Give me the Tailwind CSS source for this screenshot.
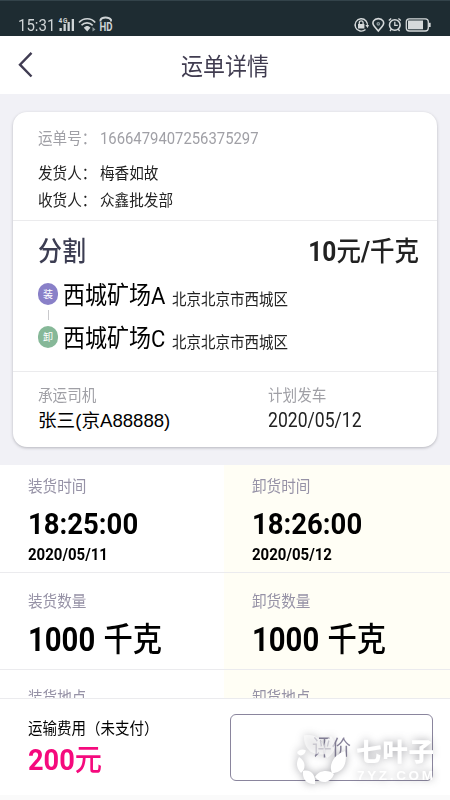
<!DOCTYPE html>
<html lang="zh-CN">
<head>
<meta charset="utf-8">
<title>运单详情</title>
<script src="https://cdn.jsdelivr.net/npm/@tailwindcss/browser@4"></script>
</head>
<body class="w-[450px] h-[800px] overflow-hidden bg-[#fafafa] font-['Roboto','Noto_Sans_CJK_SC',sans-serif] whitespace-nowrap">
<div class="flex flex-col h-[800px] relative overflow-hidden">

  <!-- status bar -->
  <div class="h-9 shrink-0 bg-[#1e2c32] border-t border-[#33434a] flex items-start justify-between pl-[18px] pr-[18px] pt-[15px] text-[#cfd4d6]">
    <div class="flex items-center h-[18px]">
      <span class="text-[15px] leading-[20px] pt-px w-[40px] scale-y-107">15:31</span>
      <svg class="w-[64px] h-[18px]" viewBox="0 0 64 18" fill="none" stroke="#cfd4d6">
        <text x="0.5" y="6.5" font-size="6.5" font-weight="bold" fill="#cfd4d6" stroke="none" font-family="Roboto" textLength="9">4G</text>
        <g fill="#cfd4d6" stroke="none"><rect x="1.500" y="12" width="2.300" height="3"/><rect x="5.500" y="8" width="2.300" height="7"/><rect x="9.500" y="6" width="2.300" height="9"/><rect x="13.700" y="3" width="2.300" height="12"/></g>
        <g stroke-width="1.700" transform="translate(0 -1)"><path d="M21 7.500C25.500 2.500 33 2.500 37.200 7.500M23.500 10.300C26.500 7 31.500 7 34.700 10.300"/><path d="M25.800 12.800C28 10.500 30.500 10.500 32.500 12.800L29.200 16.500Z" fill="#cfd4d6" stroke="none"/><path d="M34.500 12L37.500 14.500L34.500 16.500Z" fill="#8b979b" stroke="none"/></g>
        <path d="M42.500 5.500V3.800C44 .8 51 .8 53 3.800V5.500" stroke-width="1.900"/>
        <text x="41.500" y="15.200" font-size="12" font-weight="bold" fill="#cfd4d6" stroke="none" font-family="Roboto" textLength="13" lengthAdjust="spacingAndGlyphs">HD</text>
      </svg>
    </div>
    <svg class="w-[79px] h-[18px]" viewBox="0 0 79 18" fill="none" stroke="#d5d9da" stroke-width="1.300">
      <path d="M14.300 10.500A6.200 6.200 0 1 0 12.500 13.500"/><path d="M12.400 9L16 9L14.600 12Z" fill="#d5d9da" stroke="none"/>
      <rect x="5" y="8" width="6.400" height="4.500" fill="#d5d9da" stroke="none"/><path d="M6.300 8V6.500C6.300 4.300 10.100 4.300 10.100 6.500V8"/>
      <path d="M25.300 15L21.500 10.500C17.800 6 21.500 2.600 25.300 2.600S32.800 6 29.100 10.500Z" stroke-width="1.600"/><circle cx="25.300" cy="7.800" r="1.200" stroke="#8b979b"/>
      <circle cx="41.800" cy="9" r="5.300" stroke-width="1.600"/><path d="M41.800 5.800V9.300H44.800M35.800 4.500L38.200 2.400M47.800 4.500L45.400 2.400M38.500 13L37 15M45.100 13L46.600 15"/>
      <rect x="53.300" y="2.800" width="22" height="12.200" rx="3" stroke-width="1.300"/><rect x="55" y="4.500" width="15" height="8.800" fill="#d5d9da" stroke="none"/><path d="M76.800 6.800V11" stroke-width="1.700"/>
    </svg>
  </div>

  <!-- title bar -->
  <div class="h-[58px] shrink-0 bg-white relative flex items-center justify-center text-[#403c50]">
    <svg class="absolute left-[17px] top-[15px] w-[17px] h-[28px]" viewBox="0 0 17 28" fill="none" stroke="#403c52" stroke-width="2.400"><path d="M14.500 1.800L3 13.700L14.500 25.500"/></svg>
    <span class="text-[22px] leading-[30px] scale-y-107 pt-[4px]">运单详情</span>
  </div>

  <!-- waybill card -->
  <div class="h-[371px] shrink-0 bg-[#f1f1f6] pt-[18px] pl-[13px] pr-[13px]">
    <div class="h-[335px] bg-white rounded-[14px] shadow-[0_1px_3px_rgba(70,70,80,0.35)] text-[14.6px] text-[#222]">
      <div class="h-[109px] pl-[25px] pt-[14px] border-b border-[#ebebed]">
        <div class="h-[27px] flex items-center text-[#a0a0a6] scale-y-110"><span class="w-[62px]">运单号：</span><span class="text-[14.85px]">1666479407256375297</span></div>
        <div class="h-[8px]"></div>
        <div class="h-[27px] flex items-center scale-y-108"><span class="w-[62px]">发货人：</span><span>梅香如故</span></div>
        <div class="h-[27px] flex items-center scale-y-108"><span class="w-[62px]">收货人：</span><span>众鑫批发部</span></div>
      </div>
      <div class="h-[151px] pl-[25px] pr-[18px] pt-[14px] border-b border-[#ebebed]">
        <div class="h-[34px] flex items-center justify-between scale-y-112">
          <span class="text-[24px] font-medium text-[#3c3d52]">分割</span>
          <span class="text-[24.5px] font-bold">10<span class="font-medium">元</span>/<span class="font-medium">千克</span></span>
        </div>
        <div class="flex">
          <div class="w-[25px] pt-[14px] flex flex-col text-white text-[10px]">
            <span class="w-5 h-[22px] rounded-full bg-[#8980c8] flex items-center justify-center">装</span>
            <span class="w-px h-[10px] bg-[#c9c9cc] ml-[10px] mt-[5px] mb-[6px]"></span>
            <span class="w-5 h-[22px] rounded-full bg-[#86b898] flex items-center justify-center">卸</span>
          </div>
          <div class="pt-[5px]">
            <div class="h-[43px] flex items-center scale-y-112"><span class="text-[22px] text-black w-[109px]">西城矿场A</span><span class="text-[14.5px] pt-[9px]">北京北京市西城区</span></div>
            <div class="h-[43px] flex items-center scale-y-112"><span class="text-[22px] text-black w-[109px]">西城矿场C</span><span class="text-[14.5px] pt-[9px]">北京北京市西城区</span></div>
          </div>
        </div>
      </div>
      <div class="flex pl-[25px] pt-[13px]">
        <div class="w-[230px]">
          <div class="h-[23px] flex items-center text-[#a0a0a6] scale-y-108">承运司机</div>
          <div class="h-[25px] flex items-center text-[18.6px] text-black font-['Liberation_Sans','Noto_Sans_CJK_SC',sans-serif]">张三(京A88888)</div>
        </div>
        <div>
          <div class="h-[23px] flex items-center text-[#a0a0a6] scale-y-108">计划发车</div>
          <div class="h-[24px] flex items-center text-[17.6px] scale-y-112">2020/05/12</div>
        </div>
      </div>
    </div>
  </div>

  <!-- loading / unloading details -->
  <div class="h-[233px] shrink-0 overflow-hidden flex text-black">
    <div class="w-[224px] bg-white">
      <div class="h-[108px] pl-7 pt-[11px] border-b border-[#ebebee]">
        <div class="h-[23px] flex items-center text-[14.6px] text-[#9692a6] scale-y-108">装货时间</div>
        <div class="h-[49px] flex items-center text-[27.500px] font-bold scale-y-110">18:25:00</div>
        <div class="h-[12px] flex items-center text-[15px] font-bold scale-y-110">2020/05/11</div>
      </div>
      <div class="h-[97px] pl-7 pt-[18px] border-b border-[#ebebee]">
        <div class="h-[23px] flex items-center text-[14.6px] text-[#9692a6] scale-y-108">装货数量</div>
        <div class="h-[54px] flex items-center text-[29.3px] font-bold scale-y-112"><span>1000 <span class="font-medium ml-px">千克</span></span></div>
      </div>
      <div class="pl-7 pt-[17px]">
        <div class="h-[23px] flex items-center text-[14.6px] text-[#9692a6] scale-y-108">装货地点</div>
      </div>
    </div>
    <div class="w-[226px] bg-[#fffef5]">
      <div class="h-[108px] pl-7 pt-[11px] border-b border-[#ebebee]">
        <div class="h-[23px] flex items-center text-[14.6px] text-[#9692a6] scale-y-108">卸货时间</div>
        <div class="h-[49px] flex items-center text-[27.500px] font-bold scale-y-110">18:26:00</div>
        <div class="h-[12px] flex items-center text-[15px] font-bold scale-y-110">2020/05/12</div>
      </div>
      <div class="h-[97px] pl-7 pt-[18px] border-b border-[#ebebee]">
        <div class="h-[23px] flex items-center text-[14.6px] text-[#9692a6] scale-y-108">卸货数量</div>
        <div class="h-[54px] flex items-center text-[29.3px] font-bold scale-y-112"><span>1000 <span class="font-medium ml-px">千克</span></span></div>
      </div>
      <div class="pl-7 pt-[17px]">
        <div class="h-[23px] flex items-center text-[14.6px] text-[#9692a6] scale-y-108">卸货地点</div>
      </div>
    </div>
  </div>

  <!-- payment footer -->
  <div class="h-[97px] shrink-0 bg-white border-t border-[#ebebee] flex pl-7">
    <div class="w-[202px] pt-[18px]">
      <div class="h-[25px] flex items-center text-[14.5px] text-black scale-y-108">运输费用（未支付）</div>
      <div class="h-[36px] flex items-center text-[27.2px] font-bold text-[#f50a7d] scale-y-110"><span>200<span class="font-medium">元</span></span></div>
    </div>
    <div class="mt-[15px] w-[203px] h-[67px] rounded-[6px] border-[1.500px] border-[#8a859d] flex items-center justify-center text-[19.5px] text-[#89849c]"><span class="scale-y-108">评价</span></div>
  </div>

  <!-- watermark -->
  <svg class="absolute left-[280px] top-[720px] w-[170px] h-[80px] [filter:drop-shadow(0_0_4px_rgba(60,60,70,0.45))]" viewBox="280 720 170 80" fill="#fff">
    <g fill-opacity="0.6">
      <path d="M304 735.500C315 733 325 740 325.500 754C312 757 303 748 304 735.500Z"/>
      <path d="M331 736C337 743 336 753 327 758C321 751 323 741 331 736Z"/>
    </g>
    <path d="M297 753C299 749 303 749 306 750.500C304 756 300 757 297 753Z"/>
    <path d="M299 757C306 761 306 769 301 773C296 768 296 762 299 757Z"/>
    <path d="M303 771C311 769 316 775 315 784C307 785 302 779 303 771Z"/>
    <path d="M315 777C318 770 329 769 334 774C331 783 321 785 315 777Z"/>
    <path d="M345 751C348 763 343 773 332 773C328 764 335 754 345 751Z"/>
    <text x="356" y="761" font-size="25.500" font-weight="900" font-family="Noto Sans CJK SC" textLength="78">七叶子</text>
    <text x="357" y="779.500" font-size="13.500" font-weight="bold" font-family="Liberation Sans" textLength="76" lengthAdjust="spacing">7YZ.COM</text>
  </svg>
</div>
</body>
</html>
